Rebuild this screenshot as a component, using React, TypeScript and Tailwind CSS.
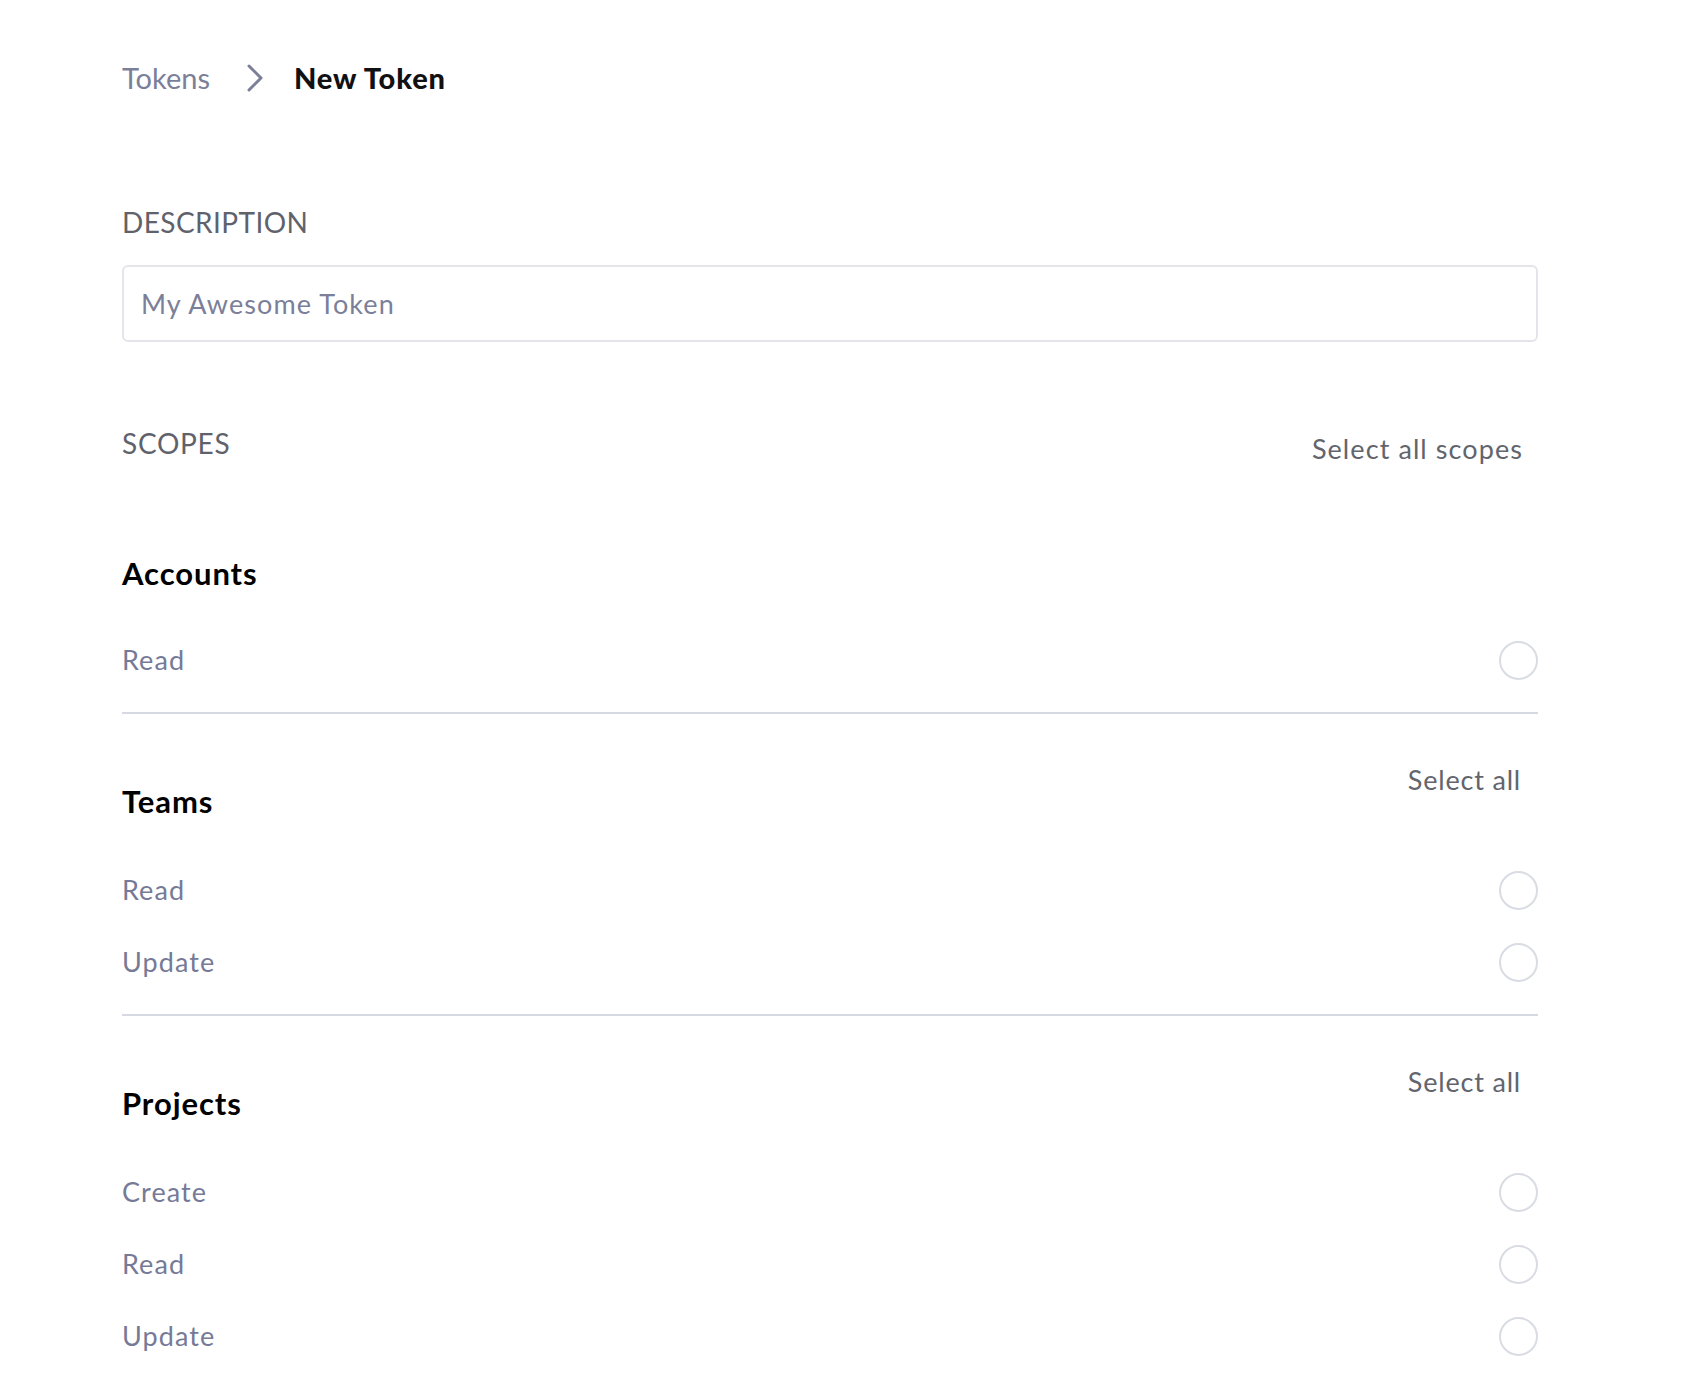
const font = { fontFamily: '"Lato", "Noto Sans", sans-serif' };

type Section = {
  title: string;
  scopes: string[];
  selectAll: boolean;
};

const sections: Section[] = [
  { title: "Accounts", scopes: ["Read"], selectAll: false },
  { title: "Teams", scopes: ["Read", "Update"], selectAll: true },
  { title: "Projects", scopes: ["Create", "Read", "Update"], selectAll: true },
];

function Chevron() {
  return (
    <svg width="18" height="28" viewBox="0 0 18 28" fill="none">
      <path
        d="M3 2 L15 14 L3 26"
        stroke="#7b7f99"
        strokeWidth="3"
        strokeLinecap="round"
        strokeLinejoin="round"
      />
    </svg>
  );
}

function ScopeRow({ label }: { label: string }) {
  return (
    <div className="flex h-[72px] items-center justify-between">
      <span className="text-[27px] leading-[40px] tracking-[0.04em] text-[#767a96]">
        {label}
      </span>
      <span className="size-[39px] rounded-full border-2 border-[#dadce4]" />
    </div>
  );
}

function ScopeSection({ section, last }: { section: Section; last: boolean }) {
  return (
    <div className={section.selectAll ? "mt-[46px]" : "mt-[84px]"}>
      <div className="flex items-start justify-between pr-[17px]">
        <h3
          className={
            "text-[31px] font-bold leading-[40px] tracking-[0.03em] text-black " +
            (section.selectAll ? "pt-[21px]" : "")
          }
        >
          {section.title}
        </h3>
        {section.selectAll && (
          <button className="text-[27px] leading-[40px] tracking-[0.03em] text-[#62656d]">
            Select all
          </button>
        )}
      </div>
      <div className={section.selectAll ? "mt-[33px]" : "mt-[31px]"}>
        {section.scopes.map((s) => (
          <ScopeRow key={s} label={s} />
        ))}
      </div>
      {!last && <div className="mt-[16px] h-[2px] bg-[#d6d9e1]" />}
    </div>
  );
}

export default function App() {
  return (
    <div className="min-h-screen bg-white" style={font}>
      <div className="ml-[122px] w-[1416px] pt-[58px] pb-[30px]">
        <nav className="flex h-[40px] items-center">
          <span className="text-[29px] text-[#7b7f99]">Tokens</span>
          <span className="ml-[36px] mr-[30px] flex items-center">
            <Chevron />
          </span>
          <span className="text-[29px] font-black tracking-[0.03em] text-[#111114]">
            New Token
          </span>
        </nav>

        <label className="mt-[104px] block text-[28px] leading-[40px] tracking-[0.015em] text-[#5f626b]">
          DESCRIPTION
        </label>
        <input
          className="mt-[23px] block h-[77px] w-full rounded-[6px] border-2 border-[#e3e5ea] px-[17px] text-[27px] tracking-[0.04em] text-[#767a96] outline-none placeholder:text-[#7b7f99]"
          placeholder="My Awesome Token"
        />

        <div className="mt-[81px] flex items-start justify-between pr-[15px]">
          <span className="text-[28px] leading-[40px] tracking-[0.025em] text-[#5f626b]">
            SCOPES
          </span>
          <button className="pt-[6px] text-[27px] leading-[40px] tracking-[0.04em] text-[#62656d]">
            Select all scopes
          </button>
        </div>

        {sections.map((s, i) => (
          <ScopeSection key={s.title} section={s} last={i === sections.length - 1} />
        ))}
      </div>
    </div>
  );
}
